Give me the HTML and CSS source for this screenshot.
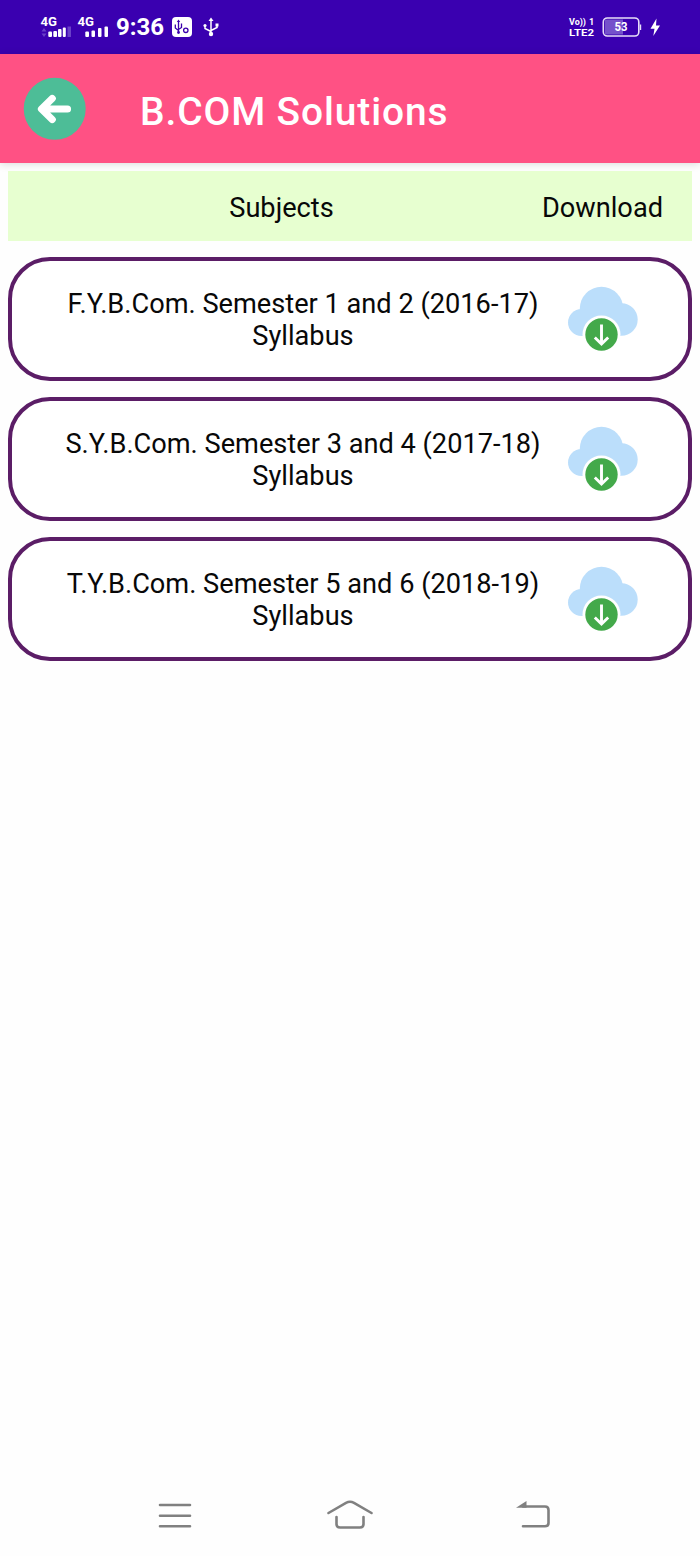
FILE: index.html
```html
<!DOCTYPE html>
<html lang="en">
<head>
<meta charset="utf-8">
<title>B.COM Solutions</title>
<link rel="stylesheet" href="styles.css">
</head>
<body>
<svg class="symbols" width="0" height="0">
  <symbol id="cloud" viewBox="0 0 72 66">
    <g fill="#bbdefb"><circle cx="34.500" cy="22.500" r="21.700"/><circle cx="54.500" cy="33.500" r="16.200"/><circle cx="14.500" cy="36.500" r="13.500"/><path d="M14 30h40v19.700H14z"/></g>
    <circle cx="34.500" cy="48.500" r="19" fill="#fff"/>
    <circle cx="34.500" cy="48.500" r="16.200" fill="#43a94a"/>
    <path d="M34.500 38.500v19M27.800 51.500l6.700 6.500 6.700-6.500" fill="none" stroke="#fff" stroke-width="2.900"/>
  </symbol>
</svg>
<div class="status">
  <svg class="signals" width="70" height="26" viewBox="0 0 70 26">
    <g fill="#fff" class="net"><text x="0.500" y="12" textLength="16.500" lengthAdjust="spacingAndGlyphs">4G</text><text x="37.500" y="12" textLength="16.500" lengthAdjust="spacingAndGlyphs">4G</text></g>
    <g fill="#fff"><rect x="8.300" y="17.500" width="3.700" height="5.500" rx="1"/><rect x="13.300" y="17" width="3.700" height="6" rx="1"/><rect x="18" y="15" width="3.500" height="8" rx="1"/><rect x="22.800" y="13.500" width="3" height="9.500" rx="1"/>
    <rect x="45.300" y="17.500" width="3.700" height="5.500" rx="1"/><rect x="51.500" y="16.500" width="3.500" height="6.500" rx="1"/><rect x="58" y="14" width="3.500" height="9" rx="1"/><rect x="64.500" y="12.500" width="3.500" height="10.500" rx="1"/></g>
    <path d="M27.500 12.500h3.500V23h-3.500zM1.500 17.500l2.500-3.500 2.500 3.500zM1.500 19.500l2.500 3.500 2.500-3.500z" fill="#6a40c8"/>
  </svg>
  <span class="clock">9:36</span>
  <svg class="debug" width="20" height="20" viewBox="0 0 20 20">
    <rect width="20" height="20" rx="4" fill="#fff"/>
    <g fill="none" stroke="#3b00ac" stroke-width="1.300"><path d="M6.500 4v11M3.300 7.500v3.500l3.200 2.500M9.500 6.500v4L6.500 12.500"/><circle cx="13.800" cy="13.300" r="2.200"/></g><path d="M4.800 5 6.500 2.500 8.200 5z" fill="#3b00ac"/><circle cx="6.500" cy="15.500" r="1.400" fill="#3b00ac"/>
  </svg>
  <svg class="usb" width="16" height="20" viewBox="0 0 16 20">
    <path d="M8 2v15M2 8v3.500L8 14.500M14 7v3.500L8 13.500" fill="none" stroke="#fff" stroke-width="1.500"/>
    <path d="M5.500 4 8 .5 10.500 4z" fill="#fff"/><circle cx="8" cy="17" r="2.200" fill="#fff"/><circle cx="2" cy="8.500" r="1.600" fill="#fff"/><path d="M12.500 6.500h3v3h-3z" fill="#fff"/>
  </svg>
  <svg class="power" width="94" height="22" viewBox="0 0 94 22">
    <g fill="#fff" class="volte"><text x="1" y="9.300" textLength="17" lengthAdjust="spacingAndGlyphs">Vo))</text><text x="21" y="9.300">1</text><text x="1" y="19.800" textLength="25" lengthAdjust="spacingAndGlyphs">LTE2</text></g>
    <rect x="37" y="3.500" width="18" height="15" fill="#7551cb"/>
    <rect x="35.300" y="2" width="35.500" height="18" rx="4" fill="none" stroke="#e6ddf8" stroke-width="1.600"/>
    <path d="M72.500 8.500v5.500" stroke="#e6ddf8" stroke-width="1.400"/>
    <text x="46.500" y="15.200" textLength="13" lengthAdjust="spacingAndGlyphs" class="level" fill="#fff">53</text>
    <path d="M88.500 2.500 82.500 12.800h4l-1.200 7.200 6.700-10.500h-4z" fill="#fff"/>
  </svg>
</div>
<header class="appbar">
  <svg class="back" width="63" height="63" viewBox="0 0 63 63">
    <circle cx="31.700" cy="31.800" r="31" fill="#4dbd97"/>
    <path d="M29.200 21.500 18.500 32 29.200 42.500M19 32h25.500" fill="none" stroke="#fff" stroke-width="7.200" stroke-linecap="round" stroke-linejoin="round"/>
  </svg>
  <h1 class="title">B.COM Solutions</h1>
</header>
<main class="content">
  <div class="heading"><span class="subjects">Subjects</span><span class="download">Download</span></div>
  <div class="card"><p class="label">F.Y.B.Com. Semester 1 and 2 (2016-17)<br>Syllabus</p><svg class="cloud"><use href="#cloud"/></svg></div>
  <div class="card"><p class="label">S.Y.B.Com. Semester 3 and 4 (2017-18)<br>Syllabus</p><svg class="cloud"><use href="#cloud"/></svg></div>
  <div class="card"><p class="label">T.Y.B.Com. Semester 5 and 6 (2018-19)<br>Syllabus</p><svg class="cloud"><use href="#cloud"/></svg></div>
</main>
<nav class="navbar">
  <svg width="34" height="34" viewBox="0 0 34 34"><path d="M2 5h30M2 15.700h30M2 26.300h30" class="line"/></svg>
  <svg width="46" height="34" viewBox="0 0 46 34"><path d="M1.500 13 19 2.800q4-2 8 0L44.500 13M9.500 17v7q0 3.500 3.500 3.500h20q3.500 0 3.500-3.500v-7" class="line"/></svg>
  <svg width="36" height="34" viewBox="0 0 36 34"><path d="M7 6.500h22q3.500 0 3.500 3.500v13q0 3.300-3.500 3.300H7" class="line"/><path d="M0 7.800 10.500 1v6.800z" fill="#808080"/></svg>
</nav>
</body>
</html>
```
FILE: styles.css
```css
* { box-sizing: border-box; }
body { margin: 0; width: 700px; height: 1556px; display: flex; flex-direction: column; background: #fefefe; color: #080808; font-family: Roboto, sans-serif; }
.symbols { position: absolute; }
svg { flex: none; display: block; }
.status { height: 54px; flex: none; background: #3a00b0; display: flex; padding: 0 13px 0 40px; }
.signals { margin-top: 14px; }
.net { font: 700 13px Roboto, sans-serif; }
.clock { width: 48px; margin: 13px 0 0 6px; color: #fff; font-size: 24px; font-weight: 700; line-height: 28px; }
.debug { margin: 17px 0 0 8px; }
.usb { margin: 17px 0 0 11px; }
.power { margin: 16px 25px 0 auto; }
.volte { font: 700 9px Roboto, sans-serif; }
.level { font: 700 12px Roboto, sans-serif; }
.appbar { height: 109px; flex: none; background: #ff5184; display: flex; box-shadow: 0 1px 8px rgba(0, 0, 0, .15); padding: 23px 0 0 23px; }
.title { margin: 12px 0 0 54px; color: #fff; font-size: 38.9px; font-weight: 500; line-height: 46px; letter-spacing: .9px; white-space: nowrap; }
.content { display: flex; flex-direction: column; gap: 16px; padding: 8px 8px 0; font-size: 27.2px; line-height: 32px; flex: 1; position: relative; }
.heading { height: 70px; background: #e7ffd0; display: flex; align-items: center; padding: 3px 29px 0 34px; }
.subjects { flex: 1; text-align: center; padding-right: 21px; }
.card { height: 124px; border: 4px solid #5b1d66; border-radius: 42px; display: flex; padding: 27px 49px 0 32px; background: #fff; }
.label { flex: 1; margin: 0; text-align: center; white-space: nowrap; }
.cloud { width: 72px; height: 66px; margin-left: 5px; margin-top: -2px; }
.navbar { height: 56px; flex: none; display: grid; grid-template-columns: 169px 189px 36px; padding-left: 158px; }
.line { fill: none; stroke: #808080; stroke-width: 2.6; stroke-linecap: round; }
```
